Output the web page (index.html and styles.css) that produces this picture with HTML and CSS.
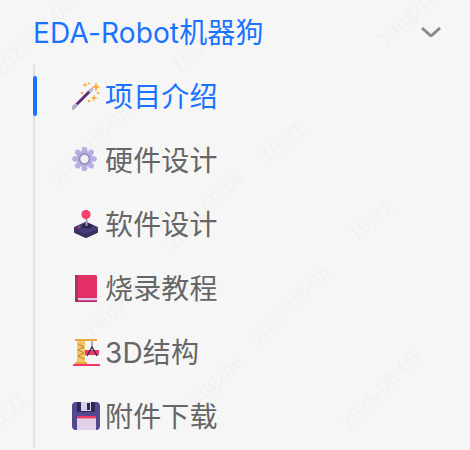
FILE: index.html
```html
<!DOCTYPE html>
<html>
<head>
    <title>EDA-Robot机器狗</title>
    <link rel="stylesheet" href="styles.css">
</head>
<body>
    <svg class="watermark" width="470" height="450">
        <text transform="translate(38 42) rotate(-45)">2025-08-08</text>
        <text transform="translate(198 58) rotate(-40)">16:21</text>
        <text transform="translate(412 20) rotate(-40)">yangzhe</text>
        <text transform="translate(95 150) rotate(-45)">2025-08-08</text>
        <text transform="translate(287 148) rotate(-40)">16:21</text>
        <text transform="translate(210 215) rotate(-45)">2025-08-08</text>
        <text transform="translate(375 226) rotate(-40)">16:21</text>
        <text transform="translate(295 310) rotate(-45)">2025-08-08</text>
        <text transform="translate(117 313) rotate(-40)">yangzhe</text>
        <text transform="translate(216 388) rotate(-40)">yangzhe</text>
        <text transform="translate(10 418) rotate(-40)">16:21</text>
        <text transform="translate(385 395) rotate(-45)">2025-08-08</text>
    </svg>

    <nav class="sidebar">
        <div class="group-title">
            <span>EDA-Robot机器狗</span>
            <svg class="chevron" width="20" height="10" viewBox="0 0 20 10">
                <path d="M1 1l9 8 9-8" fill="none" stroke="#8c8c8c" stroke-width="3"/>
            </svg>
        </div>

        <ul class="menu">
            <li class="menu-item active">
                <svg class="icon" width="28" height="28" viewBox="0 0 28 28">
                    <path d="M1 26L19 8" stroke="#5c2a78" stroke-width="3" stroke-linecap="round"/>
                    <path d="M1 26l3-3" stroke="#b9b3c9" stroke-width="3" stroke-linecap="round"/>
                    <path d="M18 9l2-2" stroke="#c4bdd6" stroke-width="3" stroke-linecap="round"/>
                    <path d="M24 0l1.2 3.8L29 5l-3.8 1.2L24 10l-1.2-3.8L19 5l3.8-1.2z" fill="#f9b040"/>
                    <path d="M22 12l.9 3.1 3.1.9-3.1.9-.9 3.1-.9-3.1-3.1-.9 3.1-.9z" fill="#f9b040"/>
                    <path d="M13 0l.7 2.3L16 3l-2.3.7L13 6l-.7-2.3L10 3l2.3-.7z" fill="#f9b040"/>
                    <circle cx="17" cy="1.5" r="1.2" fill="#f9c060"/>
                    <circle cx="26" cy="11" r="1.3" fill="#f9b040"/>
                    <circle cx="10" cy="11" r="1.3" fill="#f9b040"/>
                    <circle cx="17" cy="19" r="1.3" fill="#f9b040"/>
                </svg>
                <span>项目介绍</span>
            </li>
            <li class="menu-item">
                <svg class="icon" width="28" height="28" viewBox="0 0 28 28">
                    <g fill="#b9aee2">
                        <circle cx="12.5" cy="13" r="8.5"/>
                        <circle cx="12.5" cy="3.5" r="2.8"/>
                        <circle cx="12.5" cy="22.5" r="2.8"/>
                        <circle cx="3" cy="13" r="2.8"/>
                        <circle cx="22" cy="13" r="2.8"/>
                        <circle cx="5.8" cy="6.3" r="2.8"/>
                        <circle cx="19.2" cy="6.3" r="2.8"/>
                        <circle cx="5.8" cy="19.7" r="2.8"/>
                        <circle cx="19.2" cy="19.7" r="2.8"/>
                    </g>
                    <circle cx="12.5" cy="13" r="5" fill="#f2f0f6" stroke="#8f86b5" stroke-width="1.6"/>
                </svg>
                <span>硬件设计</span>
            </li>
            <li class="menu-item">
                <svg class="icon" width="28" height="28" viewBox="0 0 28 28">
                    <path d="M3 18l11-5 11 5v4l-11 5-11-5z" fill="#3a3160" stroke="#3a3160" stroke-width="2" stroke-linejoin="round"/>
                    <path d="M3 18l11-5 11 5-11 5z" fill="#473c78" stroke="#473c78" stroke-width="2" stroke-linejoin="round"/>
                    <ellipse cx="15" cy="16" rx="5" ry="2.5" fill="#2a2348"/>
                    <circle cx="7" cy="17" r="1" fill="#f0386a"/>
                    <path d="M14.5 6v10" stroke="#a59dbb" stroke-width="2"/>
                    <circle cx="14" cy="4.5" r="4.6" fill="#f8406e"/>
                </svg>
                <span>软件设计</span>
            </li>
            <li class="menu-item">
                <svg class="icon" width="28" height="28" viewBox="0 0 28 28">
                    <rect x="3" y="1" width="22" height="27" rx="1.5" fill="#e22f65"/>
                    <rect x="3" y="1" width="3" height="27" fill="#a33a5c"/>
                    <rect x="6" y="24" width="19" height="2.5" fill="#dcc8e8"/>
                    <rect x="3" y="26.5" width="22" height="1.5" fill="#b02a68"/>
                </svg>
                <span>烧录教程</span>
            </li>
            <li class="menu-item">
                <svg class="icon" width="28" height="28" viewBox="0 0 28 28">
                    <rect x="5" y="3" width="8" height="21" fill="#f3c568"/>
                    <path d="M6 6l6 3-6 3 6 3-6 3 6 3" fill="none" stroke="#b98a2c" stroke-width="1"/>
                    <rect x="3" y="1" width="22" height="2" fill="#e9a93c"/>
                    <rect x="3" y="24" width="12" height="2" fill="#e9a93c"/>
                    <rect x="13" y="12" width="14" height="5" fill="#f0386a"/>
                    <path d="M20 3v6" stroke="#9a94a8" stroke-width="1.5"/>
                    <path d="M15 18l5-9 5 9" fill="none" stroke="#3d3340" stroke-width="1.5"/>
                    <rect x="1" y="26" width="27" height="2" fill="#f0386a"/>
                </svg>
                <span>3D结构</span>
            </li>
            <li class="menu-item">
                <svg class="icon" width="28" height="28" viewBox="0 0 28 28">
                    <rect width="28" height="28" rx="4" fill="#54488e"/>
                    <rect x="5" y="0" width="18" height="10" fill="#2e2656"/>
                    <rect x="9" y="0" width="10" height="9" fill="#d8d0e6"/>
                    <rect x="15" y="1" width="3" height="7" fill="#2e2656"/>
                    <rect x="5" y="14" width="19" height="14" fill="#e0d0ea"/>
                    <rect x="5" y="14" width="19" height="2.4" fill="#f03a5e"/>
                </svg>
                <span>附件下载</span>
            </li>
        </ul>
    </nav>
</body>
</html>
```

FILE: styles.css
```css
body {
    margin: 0;
    height: 450px;
    overflow: hidden;
    background-color: #f6f6f6;
    font-family: "Inter", "Noto Sans CJK SC", sans-serif;
    font-size: 28px;
    letter-spacing: 0.15px;
}
.watermark {
    position: absolute;
    top: 0;
    left: 0;
}
.watermark text {
    font-family: "Liberation Serif", serif;
    font-size: 22px;
    letter-spacing: 0;
    fill: #f1f1f1;
    text-anchor: middle;
}
.sidebar {
    position: relative;
    padding-left: 33px;
}
.group-title {
    display: flex;
    justify-content: space-between;
    align-items: center;
    height: 64px;
    padding-right: 29px;
    color: #1a73ff;
}
.group-title span, .menu-item span {
    padding-bottom: 2px;
}
.menu {
    list-style: none;
    margin: 0;
    padding: 0;
    height: 384px;
    border-left: 2px solid #e2e2e2;
}
.menu-item {
    position: relative;
    display: flex;
    align-items: center;
    gap: 5px;
    height: 64px;
    padding-left: 37px;
    color: #666;
}
.menu-item.active {
    color: #1a73ff;
}
.menu-item.active::before {
    content: "";
    position: absolute;
    left: -2px;
    top: 12px;
    width: 4px;
    height: 40px;
    border-radius: 2px;
    background-color: #1a73ff;
}
.icon {
    flex: none;
}
```
